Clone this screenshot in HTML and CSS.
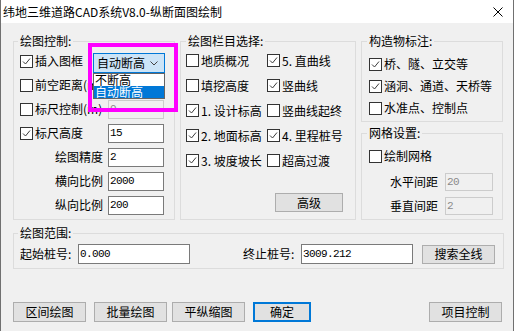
FILE: index.html
```html
<!DOCTYPE html>
<html>
  <head>
    <meta charset="utf-8" />
    <link rel="stylesheet" href="styles.css">
  </head>
  <body>
    <div class="window">
      <div class="titlebar">
        <span class="title">纬地三维道路CAD系统V8.0-纵断面图绘制</span>
        <svg class="close" width="10" height="10" viewBox="0 0 10 10">
          <path d="M0.5 0.5 L9.5 9.5 M9.5 0.5 L0.5 9.5" stroke="#000" stroke-width="1" fill="none" />
        </svg>
      </div>

      <div class="client">
        <div class="groups">
          <!-- 绘图控制 -->
          <fieldset class="group g-draw">
            <legend>绘图控制:</legend>
            <div class="row">
              <label class="chk lead"><span class="box on"><svg viewBox="0 0 11 11"><path d="M2 5.5 L4.5 8 L9 2.5" /></svg></span>插入图框</label>
              <div class="combo">
                <span>自动断高</span>
                <svg class="chev" width="8" height="5" viewBox="0 0 8 5"><path d="M0.5 0.5 L4 4 L7.5 0.5" /></svg>
                <ul class="droplist">
                  <li>不断高</li>
                  <li class="sel">自动断高</li>
                </ul>
              </div>
            </div>
            <div class="row">
              <label class="chk"><span class="box"></span>前空距离(m)</label>
            </div>
            <div class="row">
              <label class="chk cap"><span class="box"></span>标尺控制(m)</label>
              <input class="field off" value="0" disabled>
            </div>
            <div class="row">
              <label class="chk cap"><span class="box on"><svg viewBox="0 0 11 11"><path d="M2 5.5 L4.5 8 L9 2.5" /></svg></span>标尺高度</label>
              <input class="field" value="15">
            </div>
            <div class="row">
              <span class="cap right">绘图精度</span>
              <input class="field" value="2">
            </div>
            <div class="row">
              <span class="cap right">横向比例</span>
              <input class="field" value="2000">
            </div>
            <div class="row">
              <span class="cap right">纵向比例</span>
              <input class="field" value="200">
            </div>
          </fieldset>

          <!-- 绘图栏目选择 -->
          <fieldset class="group g-items">
            <legend>绘图栏目选择:</legend>
            <div class="items">
              <label class="chk"><span class="box"></span>地质概况</label>
              <label class="chk"><span class="box on"><svg viewBox="0 0 11 11"><path d="M2 5.5 L4.5 8 L9 2.5" /></svg></span>5. 直曲线</label>
              <label class="chk"><span class="box"></span>填挖高度</label>
              <label class="chk"><span class="box on"><svg viewBox="0 0 11 11"><path d="M2 5.5 L4.5 8 L9 2.5" /></svg></span>竖曲线</label>
              <label class="chk"><span class="box on"><svg viewBox="0 0 11 11"><path d="M2 5.5 L4.5 8 L9 2.5" /></svg></span>1. 设计标高</label>
              <label class="chk"><span class="box"></span>竖曲线起终</label>
              <label class="chk"><span class="box on"><svg viewBox="0 0 11 11"><path d="M2 5.5 L4.5 8 L9 2.5" /></svg></span>2. 地面标高</label>
              <label class="chk"><span class="box on"><svg viewBox="0 0 11 11"><path d="M2 5.5 L4.5 8 L9 2.5" /></svg></span>4. 里程桩号</label>
              <label class="chk"><span class="box on"><svg viewBox="0 0 11 11"><path d="M2 5.5 L4.5 8 L9 2.5" /></svg></span>3. 坡度坡长</label>
              <label class="chk"><span class="box"></span>超高过渡</label>
            </div>
            <div class="adv-row">
              <button class="btn adv">高级</button>
            </div>
          </fieldset>

          <div class="side">
            <!-- 构造物标注 -->
            <fieldset class="group g-struct">
              <legend>构造物标注:</legend>
              <label class="chk"><span class="box on"><svg viewBox="0 0 11 11"><path d="M2 5.5 L4.5 8 L9 2.5" /></svg></span>桥、隧、立交等</label>
              <label class="chk"><span class="box on"><svg viewBox="0 0 11 11"><path d="M2 5.5 L4.5 8 L9 2.5" /></svg></span>涵洞、通道、天桥等</label>
              <label class="chk"><span class="box"></span>水准点、控制点</label>
            </fieldset>

            <!-- 网格设置 -->
            <fieldset class="group g-grid">
              <legend>网格设置:</legend>
              <label class="chk"><span class="box"></span>绘制网格</label>
              <div class="row">
                <span class="cap right">水平间距</span>
                <input class="field off" value="20" disabled>
              </div>
              <div class="row">
                <span class="cap right">垂直间距</span>
                <input class="field off" value="2" disabled>
              </div>
            </fieldset>
          </div>
        </div>

        <!-- 绘图范围 -->
        <fieldset class="group g-range">
          <legend>绘图范围:</legend>
          <div class="range-row">
            <span class="cap">起始桩号:</span>
            <input class="field wide" value="0.000">
            <span class="cap end">终止桩号:</span>
            <input class="field wide" value="3009.212">
            <button class="btn search">搜索全线</button>
          </div>
        </fieldset>

        <div class="actions">
          <button class="btn">区间绘图</button>
          <button class="btn">批量绘图</button>
          <button class="btn">平纵缩图</button>
          <button class="btn ok">确定</button>
          <button class="btn project">项目控制</button>
        </div>
      </div>

      <div class="highlight"></div>
    </div>
  </body>
</html>
```

FILE: styles.css
```css
* {
  margin: 0;
  padding: 0;
  box-sizing: border-box;
}

body {
  width: 515px;
  height: 331px;
  background: #ffffff;
  font-family: "Noto Sans CJK SC", "Noto Sans", sans-serif;
  font-size: 12px;
  line-height: 16px;
  color: #000;
  overflow: hidden;
}

.window {
  position: relative;
  width: 514px;
  height: 331px;
  background: #f0f0f0;
  border-left: 1px solid #707070;
  border-right: 1px solid #707070;
}

/* Title bar */
.titlebar {
  height: 23px;
  background: #fff;
  display: flex;
  align-items: center;
  justify-content: space-between;
  padding: 0 10px 0 2px;
}

.title {
  font-size: 12px;
}

.client {
  padding: 10px 9px 0 12px;
}

.groups {
  display: flex;
  gap: 5px;
  height: 187px;
}

/* Group boxes */
.group {
  border: 1px solid #dcdcdc;
  min-width: 0;
}

.group legend {
  padding: 0 2px;
  line-height: 16px;
}

.g-draw {
  width: 162px;
  padding: 0 6px;
}

.g-draw legend,
.g-struct legend,
.g-grid legend,
.g-range legend {
  margin-left: -2px;
}

.g-items {
  width: 176px;
  padding: 0 5px;
}

.side {
  width: 142px;
  display: flex;
  flex-direction: column;
}

.g-struct {
  height: 89px;
  padding: 4px 7px 0;
}

.g-struct .chk {
  height: 22px;
}

.g-grid {
  margin-top: 3px;
  height: 95px;
  padding: 3px 7px 0;
}

.g-grid .chk {
  height: 24px;
  margin-bottom: 2px;
}

.g-grid .cap.right {
  width: 69px;
  margin-right: 7px;
}

.g-grid .field {
  width: 48px;
  height: 18px;
}

/* Rows */
.row {
  display: flex;
  align-items: center;
  height: 24px;
}

.cap {
  width: 83px;
  margin-right: 5px;
  white-space: nowrap;
  flex: none;
}

.cap.right {
  text-align: right;
}

.chk {
  display: flex;
  align-items: center;
  gap: 2px;
  white-space: nowrap;
}

.chk.lead {
  width: 73px;
  flex: none;
}

.box {
  width: 13px;
  height: 13px;
  flex: none;
  border: 1px solid #333;
  background: #fff;
  display: flex;
}

.box svg {
  width: 11px;
  height: 11px;
}

.box svg path {
  fill: none;
  stroke: #3c3c3c;
  stroke-width: 1;
}

/* Inputs */
.field {
  width: 56px;
  height: 19px;
  border: 1px solid #7a7a7a;
  background: #fff;
  padding: 0 1px;
  font-family: "Liberation Mono", "DejaVu Sans Mono", monospace;
  font-size: 11px;
  letter-spacing: -0.6px;
  color: #000;
  outline: none;
}

.field.off {
  background: #f0f0f0;
  border-color: #cccccc;
  color: #8a8a8a;
}

/* Combo with open list */
.combo {
  position: relative;
  width: 72px;
  height: 20px;
  margin-top: 4px;
  background: #cce4f7;
  border: 1px solid #0078d7;
  display: flex;
  align-items: center;
  justify-content: space-between;
  padding: 0 6px 0 3px;
}

.chev path {
  fill: none;
  stroke: #444;
  stroke-width: 1;
}

.droplist {
  position: absolute;
  top: 19px;
  left: -1px;
  width: 72px;
  list-style: none;
  background: #fff;
  border: 1px solid #646464;
  z-index: 2;
}

.droplist li {
  height: 12px;
  line-height: 12px;
  padding-left: 1px;
}

.droplist li.sel {
  background: #0078d7;
  color: #fff;
}

/* 绘图栏目选择 grid */
.items {
  display: grid;
  grid-template-columns: 81px auto;
  grid-auto-rows: 25px;
  margin-top: -1px;
}

.adv-row {
  display: flex;
  justify-content: flex-end;
  margin-top: 20px;
  padding-right: 7px;
}

/* Buttons */
.btn {
  font-family: inherit;
  font-size: 12px;
  line-height: 16px;
  color: #000;
  background: #e1e1e1;
  border: 1px solid #adadad;
  width: 73px;
  height: 20px;
  padding: 0;
}

.btn.adv {
  width: 68px;
  height: 19px;
}

.btn.ok {
  width: 58px;
  border: 2px solid #0078d7;
}

/* 绘图范围 */
.g-range {
  margin-top: 5px;
  height: 44px;
  padding: 0 6px;
}

.range-row {
  display: flex;
  align-items: center;
  height: 26px;
}

.g-range .cap {
  width: 58px;
  margin-right: 0;
}

.g-range .cap.end {
  margin-left: 53px;
}

.field.wide {
  width: 112px;
  height: 20px;
}

.btn.search {
  margin-left: 9px;
  height: 19px;
}

/* Bottom buttons */
.actions {
  display: flex;
  margin-top: 33px;
  padding-right: 2px;
}

.actions .btn + .btn {
  margin-left: 8px;
}

.actions .btn:nth-child(3) {
  margin-left: 5px;
}

.actions .btn.project {
  margin-left: auto;
}

/* Magenta annotation frame */
.highlight {
  position: absolute;
  left: 87px;
  top: 43px;
  width: 90px;
  height: 69px;
  border: 4px solid #ff00ff;
  pointer-events: none;
  z-index: 3;
}
```
